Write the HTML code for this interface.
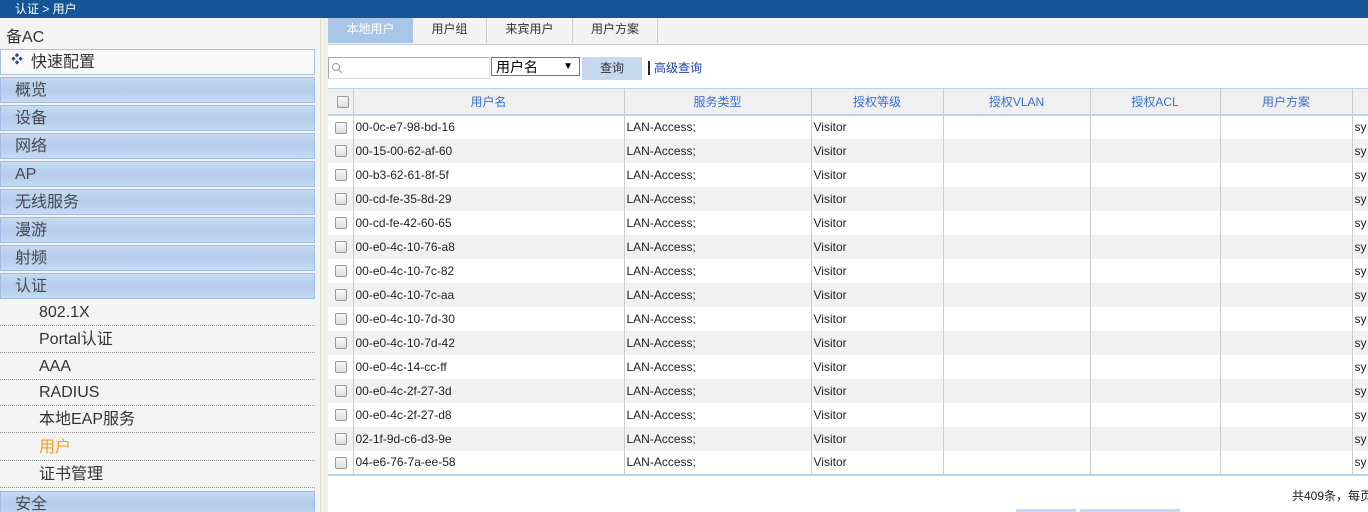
<!DOCTYPE html>
<html><head><meta charset="utf-8"><style>
*{margin:0;padding:0;box-sizing:border-box}
html,body{width:1368px;height:512px;overflow:hidden}
body{background:#fff;font-family:"Liberation Sans","Noto Sans CJK SC",sans-serif;position:relative}
#top{position:absolute;left:0;top:0;width:1368px;height:18px;background:#135597;color:#fff;font-size:12px;line-height:19px;padding-left:15px}
#side{position:absolute;left:0;top:18px;width:320px;height:494px;background:#f4f4f4}
.sep{position:absolute;left:320px;top:18px;width:8px;height:494px;background:#f1f0ea;border-left:1px solid #e0dccc}
.hd{position:absolute;left:6px;top:5px;font-size:16px;color:#333}
.m{position:absolute;left:0;width:315px;height:26px;border:1px solid #9fbde0;background:linear-gradient(#c6daf2,#b2cceb 50%,#c6daf2);font-size:16px;color:#4a4a55;line-height:25px;padding-left:14px}
.q{background:#f8f8f8;border-color:#a6c0de;padding-left:30px;color:#333}
.q:before{content:"❖";position:absolute;left:10px;top:-3px;font-size:12px;color:#2a4d80}
.s{position:absolute;left:0;width:315px;height:27px;border-bottom:1px dotted #999;font-size:16px;color:#333;padding-left:39px;line-height:27px}
#tabs{position:absolute;left:328px;top:18px;width:1040px;height:27px;background:#f3f3f3;border-bottom:1px solid #ccc}
.t{position:absolute;top:0;height:25px;font-size:12px;color:#333;text-align:center;line-height:22px;border-right:1px solid #ccc}
#search{position:absolute;left:328px;top:57px;width:162px;height:22px;border:1px solid #aaa;border-right-color:#ddd;border-bottom-color:#ddd}
#sel{position:absolute;left:491px;top:57px;width:89px;height:19px;border:1px solid #777;font-size:14px;line-height:18px;padding-left:4px}
#btn{position:absolute;left:582px;top:57px;width:60px;height:23px;background:#c5d9f1;font-size:12px;line-height:23px;text-align:center;color:#333}
#adv{position:absolute;left:648px;top:61px;font-size:12px;color:#1a44b0;border-left:2px solid #222;padding-left:4px;line-height:14px}
table{position:absolute;left:328px;top:88px;border-collapse:collapse;table-layout:fixed;width:1060px;font-size:12px}
td,th{border-right:1px solid #ccc;height:24px;padding:0 2px;white-space:nowrap;overflow:hidden;color:#222;background:#fff}
th{height:26px;background:#f0f0f0;color:#3b6fd0;font-weight:normal;border-bottom:2px solid #bcd2ea;border-top:1px solid #bcd2ea}
tbody tr.g td{background:#f2f2f2}
tbody tr:last-child td{border-bottom:2px solid #bcd2ea}
.cb{display:inline-block;width:12px;height:12px;border:1px solid #999;border-radius:2px;background:linear-gradient(#fafafa,#ddd);vertical-align:middle;margin-left:5px}
</style></head><body>
<div id="top">认证 &gt; 用户</div>
<div id="side">
<div class="hd">备AC</div>
<div class="m q" style="top:31px">快速配置</div>
<div class="m" style="top:59px">概览</div>
<div class="m" style="top:87px">设备</div>
<div class="m" style="top:115px">网络</div>
<div class="m" style="top:143px">AP</div>
<div class="m" style="top:171px">无线服务</div>
<div class="m" style="top:199px">漫游</div>
<div class="m" style="top:227px">射频</div>
<div class="m" style="top:255px">认证</div>
<div class="s" style="top:281px">802.1X</div>
<div class="s" style="top:308px">Portal认证</div>
<div class="s" style="top:335px">AAA</div>
<div class="s" style="top:361px">RADIUS</div>
<div class="s" style="top:388px">本地EAP服务</div>
<div class="s" style="top:416px;color:#f0a020">用户</div>
<div class="s" style="top:443px">证书管理</div>
<div class="m" style="top:473px">安全</div>
</div>
<div class="sep"></div>
<div id="tabs">
<div class="t" style="left:0;width:85px;background:#a9c6e8;color:#fff;border:none">本地用户</div>
<div class="t" style="left:85px;width:74px">用户组</div>
<div class="t" style="left:159px;width:86px">来宾用户</div>
<div class="t" style="left:245px;width:85px">用户方案</div>
</div>
<div id="search"><svg width="12" height="12" style="position:absolute;left:2px;top:4px"><circle cx="5" cy="5" r="3.5" fill="none" stroke="#999"/><line x1="7.5" y1="7.5" x2="11" y2="11" stroke="#999"/></svg></div>
<div id="sel">用户名<span style="position:absolute;right:6px;font-size:10px">▼</span></div>
<div id="btn">查询</div>
<div id="adv">高级查询</div>
<table>
<colgroup><col style="width:25px"><col style="width:271px"><col style="width:187px"><col style="width:132px"><col style="width:147px"><col style="width:130px"><col style="width:132px"><col style="width:36px"></colgroup>
<thead><tr><th><span class="cb"></span></th><th>用户名</th><th>服务类型</th><th>授权等级</th><th>授权VLAN</th><th>授权ACL</th><th>用户方案</th><th></th></tr></thead>
<tbody>
<tr><td><span class="cb"></span></td><td>00-0c-e7-98-bd-16</td><td>LAN-Access;</td><td>Visitor</td><td></td><td></td><td></td><td>sy</td></tr>
<tr class="g"><td><span class="cb"></span></td><td>00-15-00-62-af-60</td><td>LAN-Access;</td><td>Visitor</td><td></td><td></td><td></td><td>sy</td></tr>
<tr><td><span class="cb"></span></td><td>00-b3-62-61-8f-5f</td><td>LAN-Access;</td><td>Visitor</td><td></td><td></td><td></td><td>sy</td></tr>
<tr class="g"><td><span class="cb"></span></td><td>00-cd-fe-35-8d-29</td><td>LAN-Access;</td><td>Visitor</td><td></td><td></td><td></td><td>sy</td></tr>
<tr><td><span class="cb"></span></td><td>00-cd-fe-42-60-65</td><td>LAN-Access;</td><td>Visitor</td><td></td><td></td><td></td><td>sy</td></tr>
<tr class="g"><td><span class="cb"></span></td><td>00-e0-4c-10-76-a8</td><td>LAN-Access;</td><td>Visitor</td><td></td><td></td><td></td><td>sy</td></tr>
<tr><td><span class="cb"></span></td><td>00-e0-4c-10-7c-82</td><td>LAN-Access;</td><td>Visitor</td><td></td><td></td><td></td><td>sy</td></tr>
<tr class="g"><td><span class="cb"></span></td><td>00-e0-4c-10-7c-aa</td><td>LAN-Access;</td><td>Visitor</td><td></td><td></td><td></td><td>sy</td></tr>
<tr><td><span class="cb"></span></td><td>00-e0-4c-10-7d-30</td><td>LAN-Access;</td><td>Visitor</td><td></td><td></td><td></td><td>sy</td></tr>
<tr class="g"><td><span class="cb"></span></td><td>00-e0-4c-10-7d-42</td><td>LAN-Access;</td><td>Visitor</td><td></td><td></td><td></td><td>sy</td></tr>
<tr><td><span class="cb"></span></td><td>00-e0-4c-14-cc-ff</td><td>LAN-Access;</td><td>Visitor</td><td></td><td></td><td></td><td>sy</td></tr>
<tr class="g"><td><span class="cb"></span></td><td>00-e0-4c-2f-27-3d</td><td>LAN-Access;</td><td>Visitor</td><td></td><td></td><td></td><td>sy</td></tr>
<tr><td><span class="cb"></span></td><td>00-e0-4c-2f-27-d8</td><td>LAN-Access;</td><td>Visitor</td><td></td><td></td><td></td><td>sy</td></tr>
<tr class="g"><td><span class="cb"></span></td><td>02-1f-9d-c6-d3-9e</td><td>LAN-Access;</td><td>Visitor</td><td></td><td></td><td></td><td>sy</td></tr>
<tr><td><span class="cb"></span></td><td>04-e6-76-7a-ee-58</td><td>LAN-Access;</td><td>Visitor</td><td></td><td></td><td></td><td>sy</td></tr>
</tbody></table>
<div style="position:absolute;left:1292px;top:487px;font-size:12px;color:#222;white-space:nowrap">共409条，每页</div>
<div style="position:absolute;left:1016px;top:509px;width:60px;height:6px;background:#c5d9f1"></div>
<div style="position:absolute;left:1080px;top:509px;width:100px;height:6px;background:#c5d9f1"></div>
</body></html>
